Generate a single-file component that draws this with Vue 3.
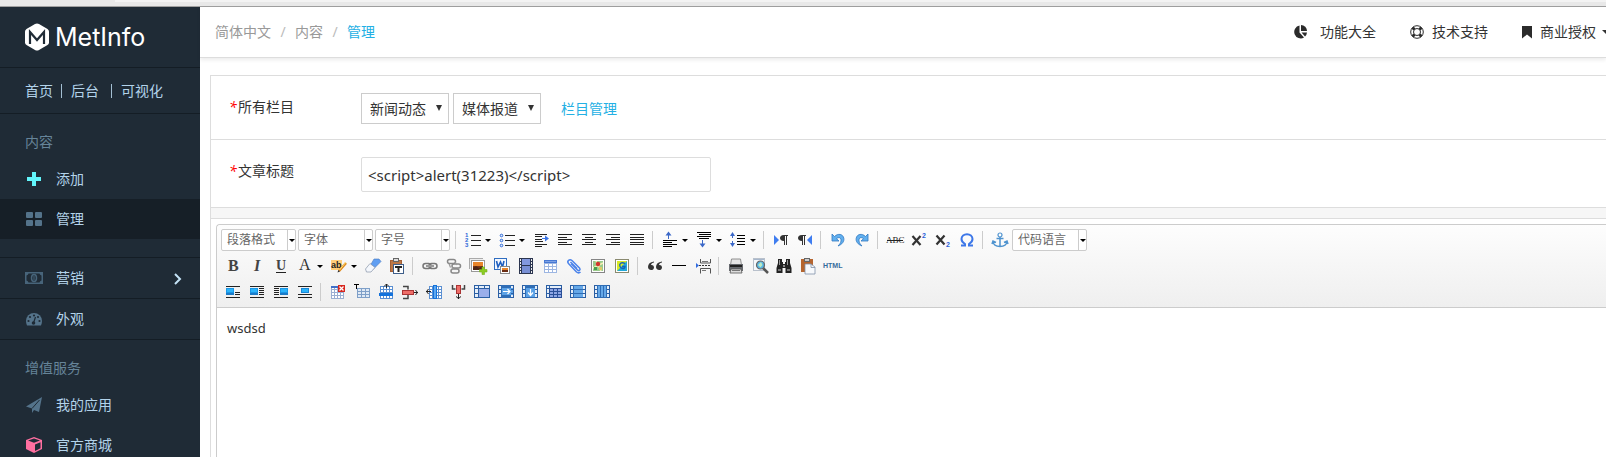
<script setup>
import { ref } from 'vue'

const column = ref('新闻动态')
const subColumn = ref('媒体报道')
const title = ref('<script>alert(31223)<\/script>')

const r = (x, y, w, h, fill = '#222') =>
  `<rect x="${x}" y="${y}" width="${w}" height="${h}" fill="${fill}"/>`
const p = (d, fill = '#222', extra = '') => `<path d="${d}" fill="${fill}" ${extra}/>`
const s = (d, stroke = '#222', w = 1, extra = '') =>
  `<path d="${d}" fill="none" stroke="${stroke}" stroke-width="${w}" ${extra}/>`
const t = (x, y, size, fill, text, extra = '') =>
  `<text x="${x}" y="${y}" font-size="${size}" fill="${fill}" ${extra}>${text}</text>`
const sans = 'font-family="Liberation Sans" font-weight="bold"'
const serif = 'font-family="Liberation Serif"'

const lines = (rows, fill) => rows.map(([x, y, w]) => r(x, y, w, 1, fill)).join('')
const grid = (x, y, w, h, cols, rows, color, bg = '#fff') => {
  let out = r(x, y, w, h, color)
  const cw = (w - 1) / cols
  const rh = (h - 1) / rows
  for (let i = 0; i < cols; i++)
    for (let j = 0; j < rows; j++)
      out += r(x + 1 + i * cw, y + 1 + j * rh, cw - 1, rh - 1, bg)
  return out
}
const blueBox = (x, y) => r(x, y, 8, 7, '#1c7cc8') + r(x, y, 8, 5, '#1a96e6') + r(x + 1, y + 1, 6, 3, '#2cb4fa')
const frame = () => r(0, 1, 16, 13, '#2a5ea3') + r(1, 2, 14, 11, '#e4eef9')
const bead = (x) => r(x, 1, 1, 13, '#2a5ea3')
const film = (body) =>
  frame() + r(3, 1, 10, 13, '#2f6db5') + body +
  [5, 9].map((y) => r(0, y, 3, 1, '#2a5ea3') + r(13, y, 3, 1, '#2a5ea3')).join('')

const icons = {
  ol: lines([[6, 3, 10], [6, 8, 10], [6, 13, 10]]) +
    t(0, 5, 6, '#2c68d8', '1', sans) + t(0, 10, 6, '#2c68d8', '2', sans) + t(0, 15, 6, '#2c68d8', '3', sans),
  ul: lines([[6, 3, 10], [6, 8, 10], [6, 13, 10]]) +
    [3.5, 8.5, 13.5].map((y) => `<circle cx="2.5" cy="${y}" r="1.3" fill="#dfe9fb" stroke="#2c68d8"/>`).join(''),
  indent: lines([[2, 2, 12], [2, 4, 7], [2, 7, 7], [2, 9, 8], [2, 12, 12], [2, 14, 7]]) +
    r(9, 6, 4, 1, '#3b74e6') + p('M12 3.5l4 3-4 3z', '#3b74e6'),
  left: lines([[1, 2, 14], [1, 5, 9], [1, 7, 14], [1, 10, 9], [1, 12, 14]]),
  center: lines([[1, 2, 14], [4, 5, 8], [1, 7, 14], [4, 10, 8], [1, 12, 14]]),
  right: lines([[1, 2, 14], [6, 5, 9], [1, 7, 14], [6, 10, 9], [1, 12, 14]]),
  justify: lines([[1, 2, 14], [1, 5, 14], [1, 7, 14], [1, 10, 14], [1, 12, 14]]),
  rowTop: lines([[1, 8, 14], [1, 10, 9], [1, 12, 14], [1, 14, 9]], '#000') +
    r(6, 2, 1, 5, '#3b68c8') + p('M3.5 3.5l3-4 3 4z', '#3b68c8'),
  rowBottom: lines([[1, 0, 14], [3, 2, 12], [1, 4, 14], [3, 6, 10]], '#000') +
    r(6, 8, 1, 5, '#3b68c8') + p('M3.5 11.5l3 4 3-4z', '#3b68c8'),
  lineHeight: lines([[7, 3, 8], [7, 6, 8], [7, 9, 8], [7, 12, 8]], '#000') +
    r(2, 2, 1, 4, '#3b68c8') + r(2, 9, 1, 4, '#3b68c8') + p('M0 4l2.5-4L5 4zM0 11h5l-2.5 4z', '#3b68c8'),
  ltr: p('M1 3l5 5-5 5z', '#3f7df0') + p('M15 3v1h-1v9h-1V4h-1v9h-1V9C8 9 7 7.5 7 6s1-3 4-3z', '#333'),
  rtl: p('M15 3l-5 5 5 5z', '#3f7df0') + p('M9 3v1H8v9H7V4H6v9H5V9C2 9 1 7.5 1 6s1-3 4-3z', '#333'),
  undo: p('M2 2v7h7L6.5 6.7C9 4.5 11.5 6 11 9c-.3 2-1.5 3.5-3 5 4-1.5 6.500-4.500 5.800-7.800C13 2 8 1 4.500 4.500z', '#62b0ef', 'stroke="#3279c0" stroke-width=".8"'),
  redo: p('M14 2v7H7l2.500-2.300C7 4.500 4.500 6 5 9c.3 2 1.500 3.500 3 5-4-1.500-6.500-4.500-5.800-7.800C3 2 8 1 11.500 4.500z', '#62b0ef', 'stroke="#3279c0" stroke-width=".8"'),
  strike: t(-1, 11, 9, '#222', 'ABC', serif) + r(0, 8, 16, 1),
  sup: s('M1.5 4l8 9M9.5 4l-8 9', '#333', 2.2) + t(11, 6, 7, '#2c5fd8', '2', sans),
  sub: s('M1.5 3.5l8 9M9.5 3.5l-8 9', '#333', 2.2) + t(11, 15, 7, '#2c5fd8', '2', sans),
  omega: s('M2 13.500h4v-1.500C3.500 10.500 2.500 9 2.500 7c0-3 2.500-4.800 5.500-4.800s5.500 1.800 5.500 4.800c0 2-1 3.500-3.500 5v1.500h4', '#3d77e8', 2),
  anchor: s('M8 5v10M4.5 6.5h7M1 9.5c.5 3.500 3.500 5 7 5s6.500-1.500 7-5M0 12l1-3 3 1.500M16 12l-1-3-3 1.500', '#4f93cf', 1.500) +
    '<circle cx="8" cy="3" r="2" fill="#fff" stroke="#4f93cf" stroke-width="1.2"/>',
  bold: t(3, 13, 16, '#444', 'B', serif + ' font-weight="bold"'),
  italic: t(5, 13, 16, '#444', 'I', serif + ' font-style="italic" font-weight="bold"'),
  underline: t(3, 12, 14, '#444', 'U', serif + ' font-weight="bold"') + r(3, 14, 10, 1),
  color: t(2, 12, 16, '#333', 'A', serif),
  highlight: r(0, 2, 11, 10, '#ffcd7a') + t(0, 10, 9, '#222', 'ab', sans) +
    s('M8 13l7-8', '#e08a1e', 2.5) + s('M8.5 12l6.5-8', '#ffe07a', 1) + p('M6.5 14.5l.8-2.5 1.700 1.500z', '#333'),
  eraser: p('M9 1h5l2 2.500-8 8H3z', '#5f9ef2', 'stroke="#4a79bd" stroke-width=".6"') +
    p('M5 5.500l5 4L6 14H1.500L.5 11z', '#f4f7fc', 'stroke="#8794a8" stroke-width=".7"'),
  pasteText: p('M1 2h12v12H1z', '#a35f36') + r(2, 3, 10, 10, '#bc7746') + r(4, 0, 6, 4, '#666') + r(5, 1, 4, 2, '#ddd') +
    r(4, 6, 11, 10, '#3f5f8a') + r(5, 7, 9, 8, '#fff') + r(6, 8, 7, 2) + r(8.5, 8, 2, 6),
  link: '<rect x="1" y="5.500" width="8" height="5" rx="2.500" fill="none" stroke="#777" stroke-width="1.500"/><rect x="7" y="5.500" width="8" height="5" rx="2.500" fill="none" stroke="#777" stroke-width="1.500"/>' + r(4, 7, 8, 2, '#999'),
  unlink: '<rect x="1.500" y="1.500" width="8" height="4" rx="2" fill="none" stroke="#888" stroke-width="1.500"/><rect x="6" y="6" width="8.500" height="4" rx="2" fill="none" stroke="#888" stroke-width="1.500"/><rect x="5" y="11" width="8" height="4" rx="2" fill="none" stroke="#888" stroke-width="1.500"/>' +
    s('M3 5.500l1.500 4M9 4l2 3M7 9l-1 3', '#999', 1.2),
  images: r(-1, 0, 14, 11, '#aaa') + r(0, 1, 14, 11, '#eee') + r(1, 2, 14, 12, '#999') + r(2, 3, 12, 10, '#fff') +
    r(3, 4, 10, 8, '#7a3516') + r(3, 4, 10, 4, '#e8842a') + p('M3 10l3-2 3 2 4-2v4H3z', '#4c2415') +
    p('M12 9h2.500v2.500H17V14h-2.500v2.500H12V14H9.500v-2.500H12z', '#8ccc23', 'stroke="#72ae18" stroke-width=".6"'),
  word: r(0, 0, 13, 12, '#2f6dc0') + r(1, 1, 11, 10, '#f4f8ff') + s('M2.500 3l1.500 6L6.500 4l2 5L10 3', '#1f5fc0', 1.6) +
    r(6, 8, 10, 8, '#888') + r(7, 9, 8, 6, '#fff') + r(8, 10, 6, 4, '#e8842a') + r(8, 12, 6, 2, '#6b2c12'),
  video: r(1, 0, 14, 16, '#2c3650') + r(4, 1, 8, 6, '#8298dd') + r(4, 8, 8, 7, '#788fd4') +
    [1, 4, 7, 10, 13].map((y) => r(2, y, 1, 2, '#eee') + r(13, y, 1, 2, '#eee')).join(''),
  table: grid(2, 2, 13, 13, 3, 4, '#9db6e2') + r(2, 2, 13, 3, '#4779d4') + r(3, 3, 11, 1, '#7fa2e4'),
  attach: s('M5 5.5l6.500 6.500c1.500 1.500 3.500-.3 2-2L6 2.500C3.500.5.5 3 2.500 5.500l8 8.500c1.500 1.200 3 1 4 0M4.500 4l6.500 6.500', '#4b83ea', 1.5),
  map: r(1, 1, 14, 14, '#858585') + r(2, 2, 12, 12, '#fff') + r(3, 3, 10, 10, '#9acb8c') +
    s('M3 10l10-5M6 3l5 10', '#f6efb4', 1.5) + r(4, 9, 3, 3, '#45a04f') + r(9, 9, 3, 3, '#e0c96a') + '<circle cx="8" cy="6" r="2.2" fill="#d3362e"/>',
  gmap: r(1, 1, 14, 14, '#8a8a70') + r(2, 2, 12, 12, '#fff') + r(3, 3, 10, 10, '#23a8d9') + p('M3 3h10L3 13z', '#d7e926') +
    s('M11 5.500C7 3.500 5 6 6 8.500s5 3 5 0H8', '#1764b8', 1.4),
  quote: p('M7 3.500C3 4 1 6 1 9c0 4 6 4 6 .5C7 7.500 5.500 6.800 4 7 4.300 5.500 5.500 4.800 7 4.500zM15 3.500c-4 .5-6 2.500-6 5.500 0 4 6 4 6 .5 0-2-1.500-2.700-3-2.500.3-1.500 1.500-2.200 3-2.500z', '#333'),
  hr: r(1, 7, 14, 1, '#000'),
  pageBreak: s('M5.500 1v4h10V1M5.500 15.500v-5h10v5', '#555', 1) + r(7, 3, 6, 1, '#777') + r(7, 12, 4, 1, '#777') +
    [4, 7, 10, 13].map((x) => r(x, 7, 2, 1, '#333')).join('') + p('M1 5l3 2.500L1 10z', '#2f6ae0'),
  print: p('M3.500 1h9l1 6h-11z', '#e6e6e6', 'stroke="#777" stroke-width=".8"') + r(1, 6, 14, 7, '#66696e') + r(2, 7, 12, 2, '#222') +
    p('M3 11h10l1 4H2z', '#ddd', 'stroke="#555" stroke-width=".8"') + r(4, 12, 8, 1, '#777'),
  preview: r(1, 0, 12, 13, '#b9c1cc') + r(2, 1, 10, 11, '#f6f8fb') + r(2, 1, 10, 1, '#a7b7cc') + s('M11 10l5 5', '#555', 2.5) +
    '<circle cx="8.500" cy="7" r="4" fill="#58b7e6" stroke="#666" stroke-width="1.200"/>' + p('M6 7l3-3 1.500 3-2 2.500z', '#bdebc4'),
  search: p('M2 1h4v3h1v2h2V4h1V1h4v4l1.500 5v5H9.500v-5h-3v5H.5v-5L2 5z', '#222') + r(3, 2, 1, 5, '#999') + r(11, 2, 1, 5, '#999') + r(2, 11, 3, 2, '#777') + r(11, 11, 3, 2, '#777') + r(7, 7, 2, 2, '#888'),
  paste: p('M1 1h12v13H1z', '#b5652f') + r(4, 0, 6, 4, '#666') + r(5, 1, 4, 2, '#ccc') + p('M5 6h6l4 3v7H5z', '#f7f9fc', 'stroke="#8293aa" stroke-width=".8"') + s('M11 6v3.500h4', '#8293aa', 0.8),
  html: t(-1, 10, 7, '#356b9c', 'HTML', sans),
  imgNone: lines([[1, 2, 14], [1, 13, 14], [10, 8, 5], [10, 10, 5]]) + blueBox(1, 4),
  imgLeft: lines([[1, 2, 14], [10, 4, 5], [10, 6, 5], [10, 8, 5], [10, 10, 5], [1, 13, 14]]) + blueBox(1, 4),
  imgRight: lines([[1, 2, 14], [1, 4, 5], [1, 6, 5], [1, 8, 5], [1, 10, 5], [1, 13, 14]]) + blueBox(7, 4),
  imgCenter: lines([[1, 2, 14], [1, 10, 14], [1, 13, 14]]) + r(4, 4, 8, 5, '#1a86d6') + r(5, 5, 6, 3, '#2cb4fa'),
  tableDelete: grid(1, 2, 13, 13, 4, 4, '#9aaed2') + r(1, 2, 10, 2, '#3f6fc9') + r(8, 1, 7, 7, '#d7261e') + s('M9.500 2.500l4 4M13.500 2.500l-4 4', '#fff', 1.3),
  tableTitle: grid(3, 4, 13, 10, 3, 3, '#7e9fc8', '#dfe9f5') + r(0, 0, 5, 1, '#000') + r(2, 0, 1, 5, '#000'),
  rowInsert: grid(2, 2, 13, 13, 4, 4, '#5a8fd2') + r(1, 9, 14, 3, '#1372dc') + r(8, 0, 1, 4) + s('M6 2.500L8.500 0 11 2.500', '#222', 1),
  rowDelete: s('M1 2.500h5v3M1 14.500h5v-4', '#444', 1.5) + r(0, 6, 12, 5, '#a33') + r(1, 7, 10, 3, '#ee6d68') + r(12, 8, 4, 1) + s('M13.500 6l2 2.500-2 2.500', '#222'),
  colInsert: grid(3, 2, 13, 13, 4, 4, '#5a8fd2') + r(7, 1, 4, 14, '#1372dc') + r(8, 2, 2, 12, '#5ea8f0') + r(0, 7, 5, 1) + s('M2.500 5L.5 7.500l2 2.500', '#222'),
  colDelete: s('M2.500 1v4h3M14.500 1v4h-3', '#444', 1.5) + r(6, 1, 5, 9, '#a33') + r(7, 2, 3, 7, '#ee6d68') + r(8, 10, 1, 5) + s('M6 12.500l2.500 2 2.500-2', '#222'),
  mergeCells: frame() + bead(4) + r(0, 4, 16, 1, '#2a5ea3') + r(5, 5, 10, 8, '#9aaeea') + r(0, 9, 4, 1, '#2a5ea3') + r(10, 1, 1, 3, '#2a5ea3'),
  mergeRight: film(r(4, 4, 11, 7, '#5aa1e6') + s('M5 7.500h7M9.500 5l2.500 2.500L9.500 10', '#fff', 1.2)),
  mergeDown: film(r(4, 4, 9, 9, '#5aa1e6') + s('M8.500 5v6M6 8.500l2.500 3 2.500-3', '#fff', 1.2)),
  splitCells: frame() + bead(3) + r(0, 4, 16, 1, '#2a5ea3') + grid(3, 4, 13, 10, 3, 3, '#2a4f98', '#8da5e4') + r(0, 9, 4, 1, '#2a5ea3'),
  splitRows: film(r(4, 2, 9, 3, '#65a8e8') + r(4, 6, 9, 3, '#65a8e8') + r(4, 10, 9, 3, '#65a8e8')),
  splitCols: film(r(4, 2, 2, 11, '#65a8e8') + r(7, 2, 2, 11, '#65a8e8') + r(10, 2, 2, 11, '#65a8e8')),
}

const b = (icon, label) => ({ icon, label })
const m = (icon, label) => ({ icon, label, menu: true })
const c = (text) => ({ combo: text })
const sep = { sep: true }

const toolbar = [
  [c('段落格式'), c('字体'), c('字号'), sep, m('ol', '有序列表'), m('ul', '无序列表'), b('indent', '首行缩进'),
    b('left', '居左对齐'), b('center', '居中对齐'), b('right', '居右对齐'), b('justify', '两端对齐'), sep,
    m('rowTop', '段前距'), m('rowBottom', '段后距'), m('lineHeight', '行间距'), sep,
    b('ltr', '从左向右输入'), b('rtl', '从右向左输入'), sep, b('undo', '撤销'), b('redo', '重做'), sep,
    b('strike', '删除线'), b('sup', '上标'), b('sub', '下标'), b('omega', '特殊字符'), sep, b('anchor', '锚点'), c('代码语言')],
  [b('bold', '加粗'), b('italic', '斜体'), b('underline', '下划线'), m('color', '字体颜色'), m('highlight', '背景色'),
    b('eraser', '清除格式'), b('pasteText', '纯文本粘贴'), sep, b('link', '超链接'), b('unlink', '取消链接'),
    b('images', '多图上传'), b('word', '图片转存'), b('video', '视频'), b('table', '表格'), b('attach', '附件'),
    b('map', '百度地图'), b('gmap', 'Google地图'), sep, b('quote', '引用'), b('hr', '分隔线'), b('pageBreak', '分页'), sep,
    b('print', '打印'), b('preview', '预览'), b('search', '查询替换'), b('paste', '粘贴'), b('html', '源代码')],
  [b('imgNone', '默认'), b('imgLeft', '左浮动'), b('imgRight', '右浮动'), b('imgCenter', '居中'), sep,
    b('tableDelete', '删除表格'), b('tableTitle', '插入标题'), b('rowInsert', '前插入行'), b('rowDelete', '删除行'),
    b('colInsert', '前插入列'), b('colDelete', '删除列'), b('mergeCells', '合并单元格'), b('mergeRight', '右合并'),
    b('mergeDown', '下合并'), b('splitCells', '完全拆分'), b('splitRows', '拆分成行'), b('splitCols', '拆分成列')],
]
</script>

<template>
  <div class="page">
    <div class="browser-edge"><span class="address"></span></div>
    <div class="shell">
      <aside class="sidebar">
        <a href="#" class="logo">
          <svg width="26" height="28" viewBox="0 0 26 28" aria-hidden="true">
            <path d="M13 .5Q14 .5 15 1l8.500 5q1.500 1 1.500 2.500v11q0 1.500-1.500 2.500L15 27q-2 1-4 0l-8.500-5Q1 21 1 19.500v-11Q1 7 2.500 6L11 1q1-.5 2-.5z" fill="#fff" />
            <path d="M6 21V9l7 8 7-8v12" fill="none" stroke="#1f2b36" stroke-width="2.200" />
          </svg>
          <span>MetInfo</span>
        </a>
        <nav class="quick">
          <a href="#">首页</a><i></i><a href="#">后台</a><i class="wide"></i><a href="#">可视化</a>
        </nav>
        <section class="group">
          <h2>内容</h2>
          <a href="#" class="item">
            <svg width="18" height="18" viewBox="0 0 18 18"><path d="M7 2h4v5h5v4h-5v5H7v-5H2V7h5z" fill="#62f5fb" /></svg>
            添加
          </a>
          <a href="#" class="item active">
            <svg width="18" height="18" viewBox="0 0 18 18" fill="#54738a">
              <rect x="1" y="2" width="7" height="6" rx="1" /><rect x="10" y="2" width="7" height="6" rx="1" />
              <rect x="1" y="10" width="7" height="6" rx="1" /><rect x="10" y="10" width="7" height="6" rx="1" />
            </svg>
            管理
          </a>
        </section>
        <a href="#" class="item ruled">
          <svg width="18" height="18" viewBox="0 0 18 18">
            <path d="M0 3h18v12H0zM3.500 4.500A2.500 2.500 0 0 1 1.500 6.500v5a2.500 2.500 0 0 1 2 2h11a2.500 2.500 0 0 1 2-2v-5a2.500 2.500 0 0 1-2-2z" fill="#47647a" fill-rule="evenodd" />
            <ellipse cx="9" cy="9" rx="2.500" ry="3.500" fill="none" stroke="#47647a" stroke-width="1.500" />
            <path d="M9 7v4" stroke="#47647a" />
          </svg>
          营销
          <svg class="chevron" width="10" height="14" viewBox="0 0 10 14"><path d="M2 3l5 5-5 5" fill="none" stroke="#c4e3f6" stroke-width="2" /></svg>
        </a>
        <a href="#" class="item ruled">
          <svg width="18" height="18" viewBox="0 0 18 18">
            <path d="M1 11a8 8 0 0 1 16 0q0 2.500-1 4.500H2Q1 13.500 1 11z" fill="#54738a" />
            <g fill="#1f2b36"><circle cx="3.500" cy="11" r="1.100" /><circle cx="5" cy="7" r="1.100" /><circle cx="9" cy="5.500" r="1.100" /><circle cx="13" cy="7" r="1.100" /><circle cx="14.500" cy="11" r="1.100" /><circle cx="8.500" cy="13" r="1.800" /></g>
            <path d="M8.500 13l2-6" stroke="#1f2b36" stroke-width="1.200" />
          </svg>
          外观
        </a>
        <section class="group last">
          <h2>增值服务</h2>
          <a href="#" class="item">
            <svg width="18" height="18" viewBox="0 0 18 18">
              <path d="M17 1l-3 15-5-2-2 3v-4.500l-6-2z" fill="#54738a" />
              <path d="M7 12.500L14.500 4" stroke="#1f2b36" />
            </svg>
            我的应用
          </a>
          <a href="#" class="item">
            <svg width="18" height="18" viewBox="0 0 18 18">
              <path d="M9 1l8 3v9l-8 4-8-4V4z" fill="#ff6fa0" />
              <path d="M3 4.500L9 2.500l6 2-6 2.300zM10 8.500l5.500-2.200v6L10 15z" fill="#1f2b36" />
            </svg>
            官方商城
          </a>
        </section>
      </aside>

      <div class="main">
        <header class="topbar">
          <nav class="crumbs">
            <a href="#">简体中文</a><span>/</span><a href="#">内容</a><span>/</span><a href="#" class="current">管理</a>
          </nav>
          <nav class="tools">
            <a href="#" class="roomy">
              <svg width="16" height="16" viewBox="0 0 16 16" fill="#2b2b2b">
                <path d="M7.500 1.500v7l4.500 5A6.500 6.500 0 1 1 7.500 1.500z" /><path d="M9 1a6 6 0 0 1 6 6H9z" /><path d="M9.500 8.500H15a6 6 0 0 1-2 4z" />
              </svg>功能大全</a>
            <a href="#">
              <svg width="16" height="16" viewBox="0 0 16 16" fill="none" stroke="#2b2b2b">
                <circle cx="9" cy="8" r="6.300" /><circle cx="9" cy="8" r="3.500" />
                <path d="M4.500 3.500l2 2M13.500 3.500l-2 2M4.500 12.500l2-2M13.500 12.500l-2-2" stroke-width="3" />
              </svg>技术支持</a>
            <a href="#" class="tight">
              <svg width="14" height="16" viewBox="0 0 14 16"><path d="M2 2h10v12.500l-5-4-5 4z" fill="#2b2b2b" /></svg>商业授权<b class="caret"></b></a>
          </nav>
        </header>

        <form class="card">
          <div class="row">
            <label for="column"><em>*</em>所有栏目</label>
            <div class="controls">
              <span class="picker"><select id="column" v-model="column"><option>新闻动态</option></select></span>
              <span class="picker"><select v-model="subColumn" aria-label="子栏目"><option>媒体报道</option></select></span>
              <a href="#" class="manage">栏目管理</a>
            </div>
          </div>
          <div class="row">
            <label for="title"><em>*</em>文章标题</label>
            <div class="controls"><input id="title" v-model="title" type="text" /></div>
          </div>
          <div class="band"></div>
          <div class="editor">
            <div class="toolbar">
              <div v-for="(line, i) in toolbar" :key="i" class="line">
                <template v-for="(tool, j) in line" :key="j">
                  <span v-if="tool.sep" class="sep"></span>
                  <span v-else-if="tool.combo" class="combo">
                    <select :aria-label="tool.combo"><option>{{ tool.combo }}</option></select>
                    <span class="drop"><b class="caret"></b></span>
                  </span>
                  <button v-else type="button" class="tool" :class="{ menu: tool.menu }" :aria-label="tool.label">
                    <svg width="16" height="16" viewBox="0 0 16 16" v-html="icons[tool.icon]"></svg>
                    <b v-if="tool.menu" class="caret"></b>
                  </button>
                </template>
              </div>
            </div>
            <div class="content" contenteditable="true">wsdsd</div>
          </div>
        </form>
      </div>
    </div>
  </div>
</template>

<style>
body {
  margin: 0;
  overflow: hidden;
}
</style>

<style scoped>
* {
  box-sizing: border-box;
}
.page {
  display: flex;
  flex-direction: column;
  height: 100vh;
  overflow: hidden;
  background: #fff;
  color: #333;
  font: 14px/20px "Noto Sans", "Noto Sans CJK SC", sans-serif;
}
a {
  color: inherit;
  text-decoration: none;
}
.browser-edge {
  flex: none;
  height: 7px;
  padding-left: 115px;
  background: #e8e8e8;
  border-bottom: 1px solid #a0a0a0;
}
.address {
  display: block;
  height: 2px;
  background: #f3f3f3;
}
.shell {
  display: flex;
  flex: 1;
  min-height: 0;
}
.sidebar {
  flex: none;
  width: 200px;
  background: #1f2b36;
  color: #b3d3ea;
  overflow: hidden;
}
.logo {
  display: flex;
  align-items: center;
  gap: 5px;
  height: 61px;
  padding-left: 24px;
  border-bottom: 1px solid #141d25;
  color: #fff;
  font: 25px/30px Inter, sans-serif;
}
.quick {
  display: flex;
  align-items: center;
  height: 46px;
  padding-left: 25px;
  border-bottom: 1px solid #141d25;
}
.quick i {
  width: 1px;
  height: 14px;
  margin: 0 9px 0 8px;
  background: #a3bfd2;
}
.quick .wide {
  margin-left: 12px;
}
.group {
  padding-bottom: 18px;
  border-bottom: 1px solid #141d25;
}
.group.last {
  border: 0;
}
h2 {
  margin: 0;
  padding: 18px 0 7px 25px;
  color: #668499;
  font-size: 14px;
  line-height: 20px;
  font-weight: 400;
}
.item {
  display: flex;
  align-items: center;
  gap: 13px;
  height: 40px;
  padding-left: 25px;
}
.item.active {
  background: #161f27;
}
.item.ruled {
  height: 41px;
  border-bottom: 1px solid #141d25;
}
.chevron {
  margin: 0 17px 0 auto;
}
.main {
  display: flex;
  flex: 1;
  flex-direction: column;
  min-width: 0;
}
.topbar {
  display: flex;
  flex: none;
  align-items: center;
  justify-content: space-between;
  height: 51px;
  padding-left: 15px;
  border-bottom: 1px solid #ddd;
  box-shadow: 0 2px 4px rgba(0, 0, 0, 0.08);
}
.crumbs {
  display: flex;
  color: #999;
}
.crumbs span {
  width: 24px;
  color: #bbb;
  text-align: center;
}
.crumbs .current,
.manage {
  color: #24b0e4;
}
.tools {
  display: flex;
  gap: 32px;
  margin-right: -4px;
}
.tools a {
  display: flex;
  align-items: center;
  gap: 8px;
}
.tools .roomy {
  gap: 12px;
}
.tools .tight {
  gap: 6px;
}
.caret {
  border: 3px solid transparent;
  border-top-color: #000;
  border-bottom: 0;
}
.tools .caret {
  border-width: 4px 4px 0;
  border-top-color: #333;
}
.card {
  display: flex;
  flex: 1;
  flex-direction: column;
  margin: 17px 0 0 10px;
  border: solid #ddd;
  border-width: 1px 0 0 1px;
}
.row {
  display: flex;
  padding: 17px 0 15px 18px;
  border-bottom: 1px solid #ddd;
}
.row label {
  width: 132px;
  line-height: 28px;
}
em {
  display: inline-block;
  width: 9px;
  color: #f00;
}
.controls {
  display: flex;
  align-items: center;
  gap: 4px;
}
.picker {
  position: relative;
}
.picker::after {
  position: absolute;
  top: 12px;
  right: 7px;
  border: solid transparent;
  border-width: 6px 3px 0;
  border-top-color: #333;
  content: "";
}
select,
input {
  display: block;
  appearance: none;
  margin: 0;
  background: #fff;
  color: #333;
  font: inherit;
}
.picker select {
  width: 88px;
  height: 31px;
  padding: 0 0 0 8px;
  border: 1px solid #ccc;
  border-radius: 0;
}
.manage {
  margin-left: 16px;
}
input {
  width: 350px;
  height: 35px;
  padding: 0 6px;
  border: 1px solid #ddd;
  border-radius: 2px;
  font-size: 15px;
}
.band {
  height: 11px;
  background: #f6f6f6;
  border-bottom: 1px solid #ddd;
}
.editor {
  flex: 1;
  margin: 5px 0 0 5px;
  border: solid #ccc;
  border-width: 1px 0 0 1px;
  border-radius: 4px 0 0 0;
}
.toolbar {
  padding: 2px 0 2px 4px;
  border-bottom: 1px solid #ccc;
  border-radius: 4px 0 0 0;
  background: linear-gradient(#fdfdfd, #efefef);
}
.line {
  display: flex;
  align-items: center;
  height: 26px;
}
.combo {
  display: flex;
  width: 75px;
  height: 22px;
  margin-right: 2px;
  border: 1px solid #ccc;
  border-radius: 2px;
  background: #fff;
}
.combo select {
  flex: 1;
  min-width: 0;
  padding: 0 0 0 5px;
  border: 0;
  background: none;
  color: #666;
  font-size: 12px;
}
.drop {
  display: flex;
  align-items: center;
  justify-content: center;
  width: 8px;
  border-left: 1px solid #ccc;
}
.sep {
  width: 9px;
  height: 18px;
  margin: 0 -3px 0 3px;
  border-left: 1px solid #ccc;
}
.tool {
  display: flex;
  align-items: center;
  width: 24px;
  height: 24px;
  padding: 0 4px;
  border: 0;
  background: none;
}
.tool.menu {
  gap: 4px;
  width: 34px;
}
.tool svg {
  flex: none;
  overflow: visible;
}
.content {
  padding: 10px;
  font-size: 13px;
  outline: 0;
}
</style>
